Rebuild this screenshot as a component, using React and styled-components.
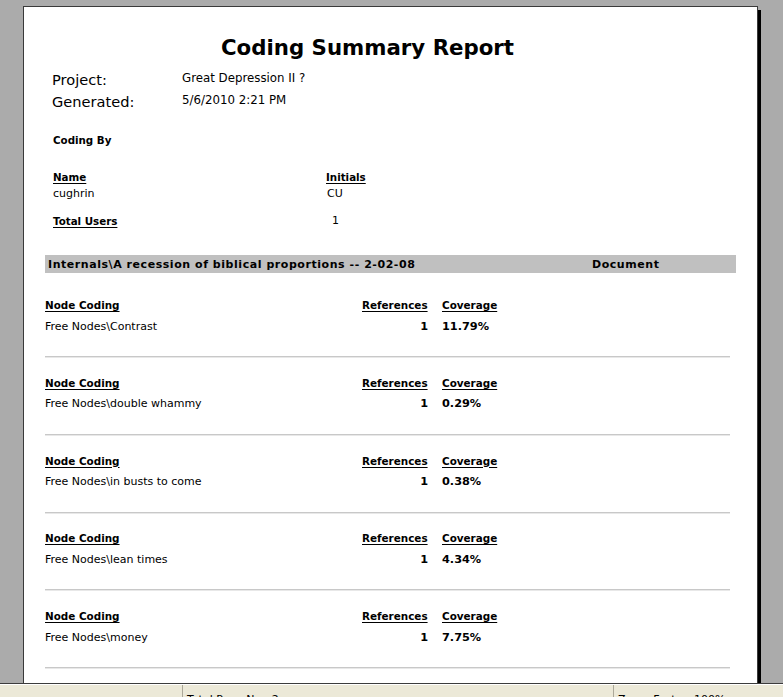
import React from "react";
import styled, { createGlobalStyle } from "styled-components";

const GlobalStyle = createGlobalStyle`
  html, body {
    margin: 0;
    padding: 0;
    background: #ababab;
    overflow: hidden;
  }
`;

const Viewer = styled.div`
  height: 697px;
  display: flex;
  flex-direction: column;
  overflow: hidden;
  background: #ababab;
  font-family: "DejaVu Sans", Verdana, sans-serif;
  color: #000;
`;

const Canvas = styled.div`
  flex: 0 0 684px;
  box-sizing: border-box;
  padding: 6px 0 0 23px;
  overflow: hidden;
  border-bottom: 1px solid #3c3c3c;
`;

const Page = styled.div`
  width: 735px;
  min-height: 760px;
  box-sizing: border-box;
  background: #fff;
  border: 1px solid #3a3a3a;
  box-shadow: 3px 4px 0 #000;
  padding: 28px 0 0 0;
`;

const Title = styled.h1`
  margin: 0;
  padding-right: 46px;
  text-align: center;
  font-size: 21.3px;
  line-height: 26px;
  font-weight: bold;
`;

const Meta = styled.div`
  display: grid;
  grid-template-columns: 130px 1fr;
  grid-auto-rows: 22px;
  align-items: center;
  margin: 7px 0 0 28px;
`;

const MetaLabel = styled.div`
  font-size: 14.6px;
`;

const MetaValue = styled.div`
  font-size: 11.8px;
  margin-top: -3px;
`;

const SmallHead = styled.div`
  font-size: 10.3px;
  font-weight: bold;
  line-height: 16px;
  text-decoration: ${(p) => (p.$underline ? "underline" : "none")};
  text-underline-offset: 2px;
`;

const Users = styled.div`
  margin: 20px 0 0 29px;
`;

const UserGrid = styled.div`
  display: grid;
  grid-template-columns: 273px 1fr;
  grid-auto-rows: 17px;
  align-items: center;
  margin-top: 20px;
`;

const Cell = styled.div`
  font-size: 11px;
  padding-left: ${(p) => p.$indent || 0}px;
`;

const TotalRow = styled(UserGrid)`
  margin-top: 10px;
`;

const Band = styled.div`
  display: grid;
  grid-template-columns: 544px 1fr;
  align-items: center;
  height: 18px;
  margin: 26px 21px 24px 21px;
  padding-left: 3px;
  background: #c0c0c0;
  font-size: 11px;
  letter-spacing: 0.55px;
  font-weight: bold;
  white-space: nowrap;
`;

const Block = styled.div`
  margin: 0 27px 0 21px;
`;

const BlockGrid = styled.div`
  display: grid;
  grid-template-columns: 303px 66px 70px;
  column-gap: 14px;
  grid-template-rows: 16px 16px;
  row-gap: 5px;
  align-items: center;
`;

const ColHead = styled.div`
  font-size: 10.4px;
  font-weight: bold;
  text-decoration: underline;
  text-underline-offset: 2px;
  white-space: nowrap;
`;

const NodeName = styled.div`
  font-size: 11px;
  white-space: nowrap;
`;

const Num = styled.div`
  font-size: 11.3px;
  font-weight: bold;
  text-align: ${(p) => (p.$right ? "right" : "left")};
  white-space: nowrap;
`;

const Separator = styled.hr`
  margin: 22px 0 16.75px 0;
  border: none;
  border-top: 1px solid #c8c8c8;
  border-bottom: 1px solid #e8e8e8;
  height: 0;
`;

const StatusBar = styled.div`
  flex: 1 0 auto;
  display: flex;
  background: #ece9d8;
  border-top: 1px solid #fff;
  font-size: 11px;
  color: #000;
`;

const StatusCell = styled.div`
  width: ${(p) => p.$width}px;
  flex: ${(p) => (p.$grow ? 1 : "none")};
  padding: 8px 0 0 4px;
  box-sizing: border-box;
  border-left: ${(p) => (p.$first ? "none" : "1px solid #aca899")};
  white-space: nowrap;
`;

const nodes = [
  { name: "Free Nodes\\Contrast", refs: 1, coverage: "11.79%" },
  { name: "Free Nodes\\double whammy", refs: 1, coverage: "0.29%" },
  { name: "Free Nodes\\in busts to come", refs: 1, coverage: "0.38%" },
  { name: "Free Nodes\\lean times", refs: 1, coverage: "4.34%" },
  { name: "Free Nodes\\money", refs: 1, coverage: "7.75%" },
];

const App = () => {
  return (
    <>
      <GlobalStyle />
      <Viewer>
        <Canvas>
          <Page>
            <Title>Coding Summary Report</Title>
            <Meta>
              <MetaLabel>Project:</MetaLabel>
              <MetaValue>Great Depression II ?</MetaValue>
              <MetaLabel>Generated:</MetaLabel>
              <MetaValue>5/6/2010 2:21 PM</MetaValue>
            </Meta>

            <Users>
              <SmallHead>Coding By</SmallHead>
              <UserGrid>
                <SmallHead $underline>Name</SmallHead>
                <SmallHead $underline>Initials</SmallHead>
                <Cell>cughrin</Cell>
                <Cell $indent={1}>CU</Cell>
              </UserGrid>
              <TotalRow>
                <SmallHead $underline>Total Users</SmallHead>
                <Cell $indent={6}>1</Cell>
              </TotalRow>
            </Users>

            <Band>
              <span>Internals\A recession of biblical proportions -- 2-02-08</span>
              <span>Document</span>
            </Band>

            {nodes.map((n) => (
              <Block key={n.name}>
                <BlockGrid>
                  <ColHead>Node Coding</ColHead>
                  <ColHead>References</ColHead>
                  <ColHead>Coverage</ColHead>
                  <NodeName>{n.name}</NodeName>
                  <Num $right>{n.refs}</Num>
                  <Num>{n.coverage}</Num>
                </BlockGrid>
                <Separator />
              </Block>
            ))}
          </Page>
        </Canvas>
        <StatusBar>
          <StatusCell $first $width={182}></StatusCell>
          <StatusCell $width={431}>Total Page No.: 2</StatusCell>
          <StatusCell $grow>Zoom Factor: 100%</StatusCell>
        </StatusBar>
      </Viewer>
    </>
  );
};

export default App;
